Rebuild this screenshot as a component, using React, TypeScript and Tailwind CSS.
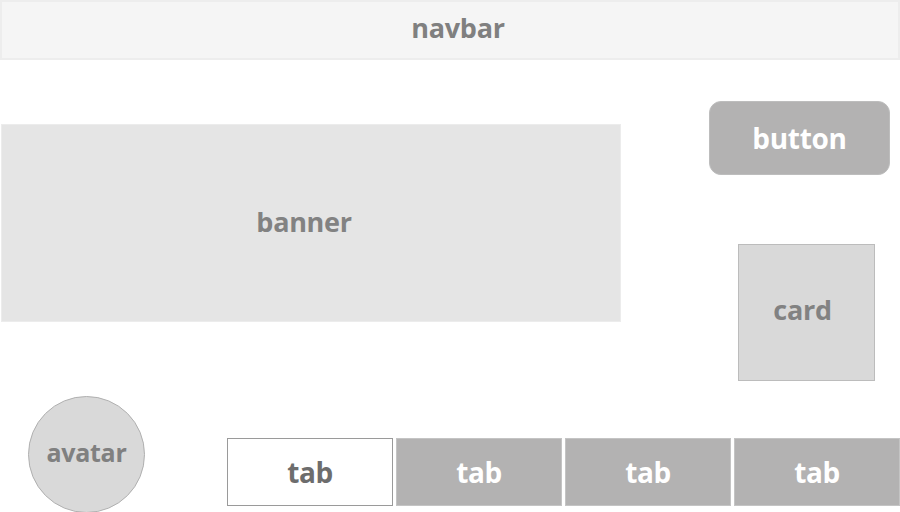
import React from "react";

const font = { fontFamily: "'Open Sans', Lato, sans-serif" };

function Tab({ active }: { active?: boolean }) {
  return (
    <div
      className={
        active
          ? "flex h-[68px] w-[166px] items-center justify-center border border-[#9a9a9a] bg-white text-[28px] font-bold tracking-[-0.5px] text-[#6d6d6d]"
          : "flex h-[68px] w-[166px] items-center justify-center border border-[#c4c4c4] bg-[#b3b2b2] text-[28px] font-bold tracking-[-0.5px] text-white"
      }
    >
      tab
    </div>
  );
}

export default function App() {
  return (
    <div className="relative h-[512px] w-[900px] overflow-hidden bg-white" style={font}>
      <div className="flex h-[60px] w-[900px] items-center justify-center border-2 border-[#ededed] bg-[#f5f5f5] pb-[4px] pl-[16px] text-[27px] font-bold tracking-[-0.3px] text-[#808080]">
        navbar
      </div>
      <div className="flex items-start">
        <div className="ml-[1px] mt-[64px] flex h-[198px] w-[620px] items-center justify-center border border-[#ececec] bg-[#e5e5e5] pb-[2px] pr-[14px] text-[27px] font-bold tracking-[-0.3px] text-[#828282]">
          banner
        </div>
        <div className="flex flex-col items-start">
          <div className="ml-[88px] mt-[41px] flex h-[74px] w-[181px] items-center justify-center rounded-[12px] border border-[#bdbdbd] bg-[#b3b2b2] text-[28px] font-bold tracking-[-0.3px] text-white">
            button
          </div>
          <div className="ml-[117px] mt-[69px] flex h-[137px] w-[137px] items-center justify-center border border-[#bcbcbc] bg-[#d9d9d9] pb-[4px] pr-[8px] text-[27px] font-bold tracking-[-0.3px] text-[#828282]">
            card
          </div>
        </div>
      </div>
      <div className="mt-[15px] flex items-start">
        <div className="ml-[28px] flex h-[117px] w-[117px] items-center justify-center rounded-full border border-[#b0b0b0] bg-[#d9d9d9] pb-[4px] text-[25px] font-bold tracking-[-0.3px] text-[#808080]">
          avatar
        </div>
        <div className="ml-[82px] mt-[42px] flex gap-[3px]">
          <Tab active />
          <Tab />
          <Tab />
          <Tab />
        </div>
      </div>
    </div>
  );
}
